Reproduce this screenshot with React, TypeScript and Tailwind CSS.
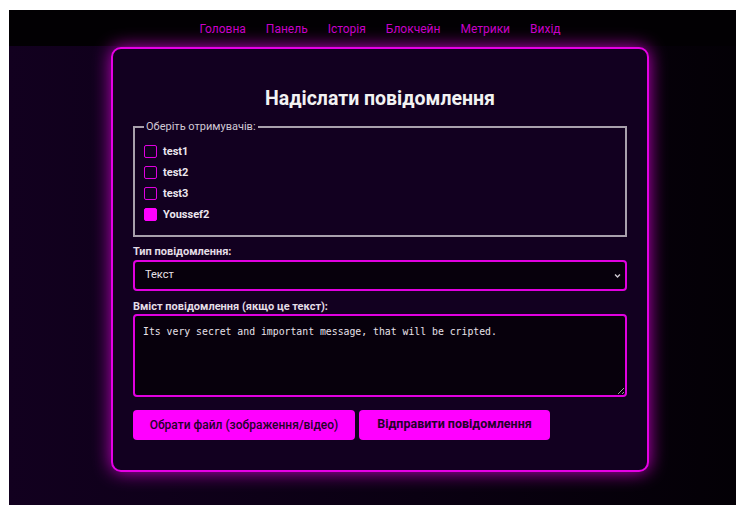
import React, { useState } from 'react';

const navLinks = ['Головна', 'Панель', 'Історія', 'Блокчейн', 'Метрики', 'Вихід'];

const recipients = [
  { id: 'test1', name: 'test1' },
  { id: 'test2', name: 'test2' },
  { id: 'test3', name: 'test3' },
  { id: 'youssef2', name: 'Youssef2' },
];

export default function App() {
  const [selected, setSelected] = useState<Set<string>>(new Set(['youssef2']));
  const [type, setType] = useState('text');
  const [message, setMessage] = useState(
    'Its very secret and important message, that will be cripted.'
  );

  const toggle = (id: string) => {
    setSelected((prev) => {
      const next = new Set(prev);
      if (next.has(id)) {
        next.delete(id);
      } else {
        next.add(id);
      }
      return next;
    });
  };

  return (
    <div className="w-[736px] h-[505px] overflow-hidden bg-white font-['Roboto','Noto_Sans',sans-serif]">
      <div className="ml-[9px] mt-[10px] w-[742px] h-[495px] bg-[linear-gradient(to_right,#12001f,#0a0012_55%,#030005)]">
        {/* верхнє меню */}
        <nav className="h-[36px] bg-[#020003] flex items-center justify-center gap-[20px] pt-[2px] text-[12px] text-[#c800c8]">
          {navLinks.map((link) => (
            <a key={link} href="#" className="hover:text-[#ff00ff]">
              {link}
            </a>
          ))}
        </nav>

        {/* форма надсилання */}
        <div className="mx-auto mt-[1px] w-[538px] rounded-[10px] border-2 border-[#e600e6] bg-[#120020] px-[20px] pt-[37px] pb-[30px] shadow-[0_0_18px_#c000c0]">
          <h2 className="text-center text-[19.5px] leading-[26px] font-bold text-[#f2f2f2] mb-[7px]">
            Надіслати повідомлення
          </h2>

          <fieldset className="border-2 border-[#a8a0ac] px-[9px] pt-[8px] pb-[12px]">
            <legend className="px-[2px] text-[11px] text-[#d0c8d4]">Оберіть отримувачів:</legend>
            <div className="flex flex-col gap-[5px]">
              {recipients.map((r) => (
                <label key={r.id} className="flex items-center gap-[6px] h-[16px] cursor-pointer">
                  <input
                    type="checkbox"
                    checked={selected.has(r.id)}
                    onChange={() => toggle(r.id)}
                    className="appearance-none w-[13px] h-[13px] rounded-[2px] border-[1.5px] border-[#e000e0] bg-transparent checked:bg-[#ff00ff] checked:border-[#ff00ff]"
                  />
                  <span className="text-[11px] leading-[16px] font-bold text-[#ece6ee]">{r.name}</span>
                </label>
              ))}
            </div>
          </fieldset>

          <label className="block mt-[8px] mb-[1px] text-[11px] leading-[14px] font-bold text-[#e4dde6]">
            Тип повідомлення:
          </label>
          <div className="relative">
            <select
              value={type}
              onChange={(e) => setType(e.target.value)}
              className="appearance-none w-full h-[31px] rounded-[4px] border-2 border-[#e000e0] bg-[#07000c] pl-[10px] text-[11px] text-[#e8e2ea] outline-none"
            >
              <option value="text">Текст</option>
              <option value="file">Файл</option>
            </select>
            <svg
              className="pointer-events-none absolute right-[6px] top-[12px] w-[7px] h-[7px] text-[#cfc8d2]"
              viewBox="0 0 10 10"
              fill="none"
              stroke="currentColor"
              strokeWidth="2"
            >
              <path d="M1.5 3.5 5 7l3.5-3.5" />
            </svg>
          </div>

          <label className="block mt-[9px] mb-[0px] text-[11px] leading-[14px] font-bold text-[#e4dde6]">
            Вміст повідомлення (якщо це текст):
          </label>
          <textarea
            value={message}
            onChange={(e) => setMessage(e.target.value)}
            className="block w-full h-[83px] rounded-[4px] border-2 border-[#e000e0] bg-[#07000c] px-[8px] py-[9px] font-['DejaVu_Sans_Mono',monospace] text-[9.8px] text-[#e8e2ea] outline-none"
          />

          <div className="mt-[13px] flex gap-[4px]">
            <button className="h-[30px] w-[222px] rounded-[4px] bg-[#ff00ff] text-[12px] font-medium text-[#24002a]">
              Обрати файл (зображення/відео)
            </button>
            <button className="h-[30px] w-[191px] rounded-[4px] bg-[#ff00ff] text-[12.5px] font-bold text-[#24002a]">
              Відправити повідомлення
            </button>
          </div>
        </div>
      </div>
    </div>
  );
}
